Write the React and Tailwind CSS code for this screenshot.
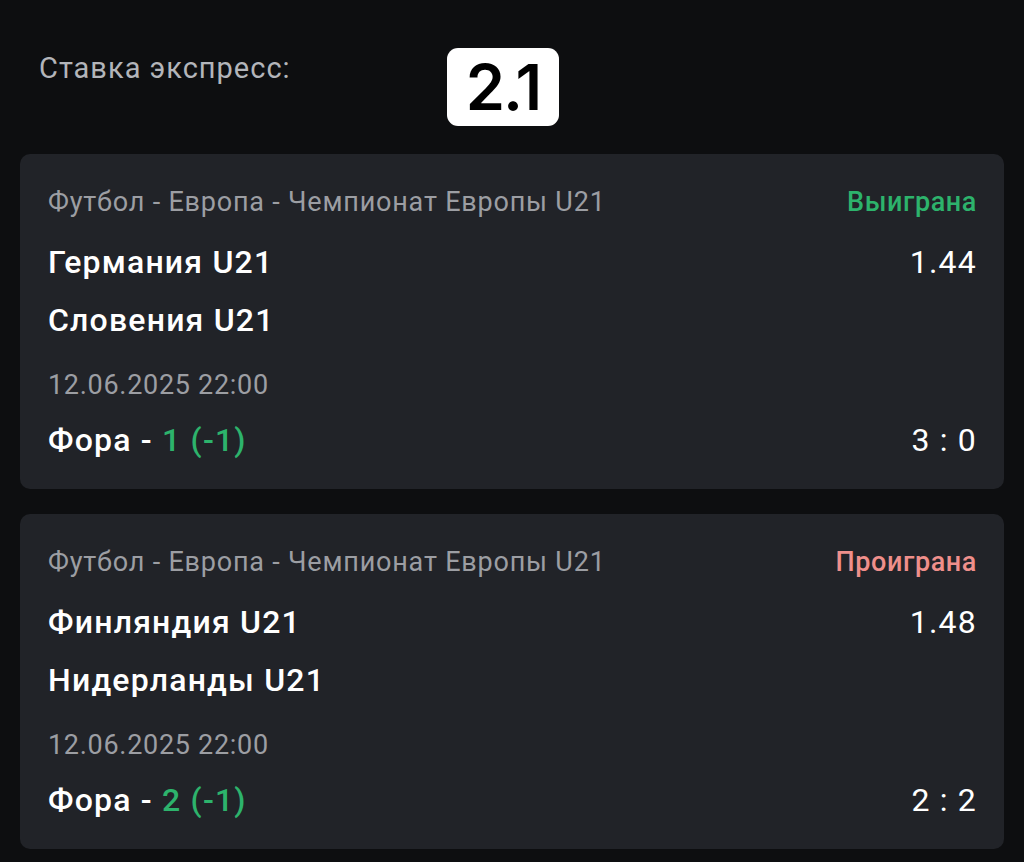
import React from "react";

const bets = [
  { status: "Выиграна", win: true, t1: "Германия U21", t2: "Словения U21", odd: "1.44", date: "12.06.2025 22:00", pick: "1 (-1)", score: "3 : 0" },
  { status: "Проиграна", win: false, t1: "Финляндия U21", t2: "Нидерланды U21", odd: "1.48", date: "12.06.2025 22:00", pick: "2 (-1)", score: "2 : 2" },
];

function Card({ b }) {
  return (
    <div className="bg-[#212328] rounded-[10px] pt-[30px] pb-[29px] pl-[28px] pr-[28px]">
      <div className="flex justify-between items-center h-[36px]">
        <span className="text-[27px] tracking-[0.8px] text-[#9c9ea3]">Футбол - Европа - Чемпионат Европы U21</span>
        <span className={"text-[27px] tracking-[0.6px] font-medium -mr-[1px] " + (b.win ? "text-[#2db36c]" : "text-[#ef8f8b]")}>{b.status}</span>
      </div>
      <div className="flex justify-between items-center h-[58px] mt-[13px]">
        <span className="text-[32px] tracking-[1.2px] font-medium text-white">{b.t1}</span>
        <span className="text-[32px] tracking-[1.2px] text-white -mr-[1px]">{b.odd}</span>
      </div>
      <div className="flex items-center h-[58px]">
        <span className="text-[32px] tracking-[1.2px] font-medium text-white">{b.t2}</span>
      </div>
      <div className="flex items-center h-[36px] mt-[18px]">
        <span className="text-[27px] tracking-[0.7px] text-[#9c9ea3]">{b.date}</span>
      </div>
      <div className="flex justify-between items-center h-[40px] mt-[17px]">
        <span className="text-[32px] tracking-[1.2px] text-white font-medium">
          Фора - <span className="text-[#2db36c]">{b.pick}</span>
        </span>
        <span className="text-[32px] text-white tracking-[1.2px] -mr-[1px]">{b.score}</span>
      </div>
    </div>
  );
}

export default function App() {
  return (
    <div className="min-h-[862px] bg-[#0d0e10] px-[20px] pt-[48px] pb-[13px]" style={{ fontFamily: "Roboto, 'Noto Sans', sans-serif" }}>
      <div className="flex items-start">
        <div className="ml-[19px] w-[408px] h-[42px] flex items-center text-[29px] tracking-[1px] text-[#b3b5ba]">Ставка экспресс:</div>
        <div className="w-[112px] h-[78px] bg-white rounded-[11px] flex items-center justify-center text-[63px] font-semibold text-black leading-none tracking-[-2px]" style={{ fontFamily: "Inter, 'Liberation Sans', sans-serif" }}>2.1</div>
      </div>
      <div className="mt-[28px] flex flex-col gap-[25px]">
        {bets.map((b, i) => <Card key={i} b={b} />)}
      </div>
    </div>
  );
}
